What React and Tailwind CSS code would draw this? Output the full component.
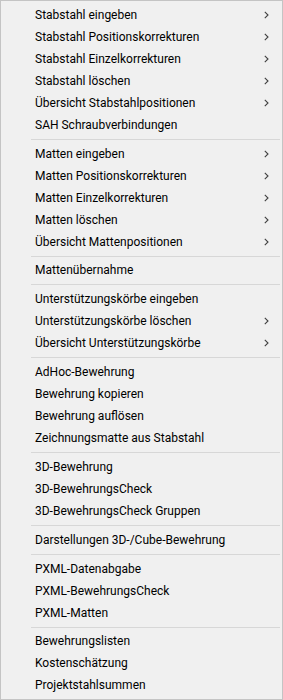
import React from "react";

const sections = [
  [
    ["Stabstahl eingeben", true],
    ["Stabstahl Positionskorrekturen", true],
    ["Stabstahl Einzelkorrekturen", true],
    ["Stabstahl löschen", true],
    ["Übersicht Stabstahlpositionen", true],
    ["SAH Schraubverbindungen", false],
  ],
  [
    ["Matten eingeben", true],
    ["Matten Positionskorrekturen", true],
    ["Matten Einzelkorrekturen", true],
    ["Matten löschen", true],
    ["Übersicht Mattenpositionen", true],
  ],
  [["Mattenübernahme", false]],
  [
    ["Unterstützungskörbe eingeben", false],
    ["Unterstützungskörbe löschen", true],
    ["Übersicht Unterstützungskörbe", true],
  ],
  [
    ["AdHoc-Bewehrung", false],
    ["Bewehrung kopieren", false],
    ["Bewehrung auflösen", false],
    ["Zeichnungsmatte aus Stabstahl", false],
  ],
  [
    ["3D-Bewehrung", false],
    ["3D-BewehrungsCheck", false],
    ["3D-BewehrungsCheck Gruppen", false],
  ],
  [["Darstellungen 3D-/Cube-Bewehrung", false]],
  [
    ["PXML-Datenabgabe", false],
    ["PXML-BewehrungsCheck", false],
    ["PXML-Matten", false],
  ],
  [
    ["Bewehrungslisten", false],
    ["Kostenschätzung", false],
    ["Projektstahlsummen", false],
  ],
];

const sepClasses = [
  "h-[7px]",
  "h-[6px]",
  "h-[7px]",
  "h-[7px]",
  "h-[7px]",
  "h-[7px]",
  "h-[7px]",
  "h-[6px]",
];

function Chevron() {
  return (
    <svg width="5" height="8" viewBox="0 0 5 8" className="mr-[13px]">
      <path d="M0.8 0.8 L4 4 L0.8 7.2" fill="none" stroke="#404040" strokeWidth="1.1" />
    </svg>
  );
}

export default function App() {
  return (
    <div
      className="w-[283px] h-[700px] bg-[#f0f0f0] border border-[#c4c4c4] py-[3px] text-[12px] text-[#000000] leading-none"
      style={{ fontFamily: '"Segoe UI", Roboto, "Noto Sans", sans-serif' }}
    >
      {sections.map((sec, si) => (
        <React.Fragment key={si}>
          {sec.map(([label, sub]) => (
            <div key={label} className="h-[22px] flex items-center justify-between pl-[34px]">
              <span>{label}</span>
              {sub ? <Chevron /> : null}
            </div>
          ))}
          {si < sections.length - 1 ? (
            <div className={`${sepClasses[si]} flex items-center pl-[30px] pr-[2px]`}>
              <div className="h-px w-full bg-[#d7d7d7]" />
            </div>
          ) : null}
        </React.Fragment>
      ))}
    </div>
  );
}
